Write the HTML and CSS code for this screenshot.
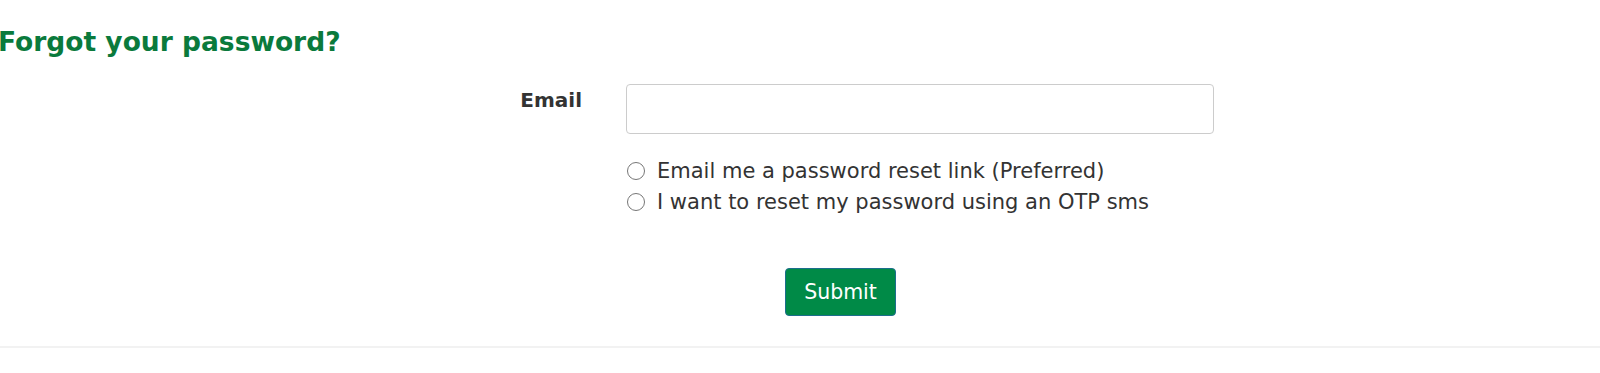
FILE: index.html
```html
<!DOCTYPE html>
<html>
<head>
<meta charset="utf-8">
<link rel="stylesheet" href="styles.css">
</head>
<body>
<div class="page">
  <h1 class="title">Forgot your password?</h1>
  <form class="form">
    <div class="row">
      <label class="label" for="email">Email</label>
      <div class="field">
        <input id="email" class="input" type="text">
        <div class="options">
          <label class="option"><input type="radio" name="m" class="radio"><span>Email me a password reset link (Preferred)</span></label>
          <label class="option"><input type="radio" name="m" class="radio"><span>I want to reset my password using an OTP sms</span></label>
        </div>
      </div>
    </div>
    <div class="actions">
      <button type="button" class="btn">Submit</button>
    </div>
  </form>
  <hr class="rule">
</div>
</body>
</html>
```
FILE: styles.css
```css
html, body {
  margin: 0;
  padding: 0;
  background: #fff;
}
body {
  font-family: "DejaVu Sans", Verdana, sans-serif;
  color: #333;
}
.page {
  padding-top: 26px;
}
.title {
  margin: 0 0 0 -2px;
  font-size: 26.5px;
  font-weight: bold;
  color: #0a7a3c;
  line-height: 32px;
}
.form {
  margin-top: 26px;
}
.row {
  display: grid;
  grid-template-columns: 582px 588px;
  column-gap: 44px;
}
.label {
  text-align: right;
  font-weight: bold;
  font-size: 20px;
  color: #333;
  padding-top: 4px;
}
.input {
  box-sizing: border-box;
  width: 588px;
  height: 50px;
  border: 1px solid #ccc;
  border-radius: 4px;
  margin: 0;
  display: block;
}
.options {
  margin-top: 21px;
  display: flex;
  flex-direction: column;
}
.option {
  display: flex;
  align-items: center;
  height: 31px;
  font-size: 21px;
  color: #333;
}
.radio {
  margin: 0 12px 0 1px;
  width: 18px;
  height: 18px;
}
.actions {
  margin-top: 51px;
  padding-left: 785px;
}
.btn {
  box-sizing: border-box;
  width: 111px;
  height: 48px;
  background: #008a47;
  border: 1px solid #1c6e8c;
  border-radius: 4px;
  color: #fff;
  font-family: "DejaVu Sans", Verdana, sans-serif;
  font-size: 20.5px;
  padding: 0;
}
.rule {
  margin: 30px 0 0;
  border: 0;
  height: 2px;
  background: #f2f2f2;
}
```
